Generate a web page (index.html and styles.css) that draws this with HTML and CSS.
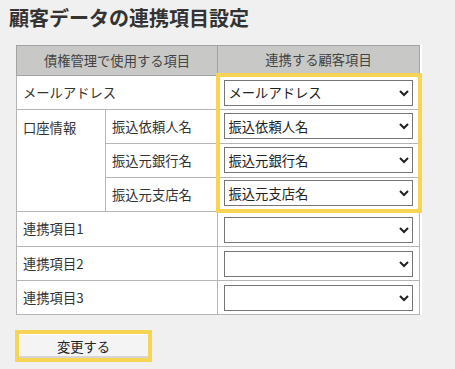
FILE: index.html
```html
<!DOCTYPE html>
<html lang="ja">
  <head>
    <meta charset="utf-8" />
    <title>顧客データの連携項目設定</title>
    <link rel="stylesheet" href="styles.css">
  </head>
  <body>
    <div class="page">
      <h1 class="title">顧客データの連携項目設定</h1>
      <table class="link-table">
        <colgroup>
          <col class="col-group" />
          <col class="col-sub" />
          <col class="col-pick" />
        </colgroup>
        <tr class="head">
          <th colspan="2">債権管理で使用する項目</th>
          <th>連携する顧客項目</th>
        </tr>
        <tr>
          <td colspan="2">メールアドレス</td>
          <td class="pick hl hl-top">
            <select><option>メールアドレス</option></select>
          </td>
        </tr>
        <tr>
          <td rowspan="3" class="group">口座情報</td>
          <td>振込依頼人名</td>
          <td class="pick hl">
            <select><option>振込依頼人名</option></select>
          </td>
        </tr>
        <tr>
          <td>振込元銀行名</td>
          <td class="pick hl">
            <select><option>振込元銀行名</option></select>
          </td>
        </tr>
        <tr>
          <td>振込元支店名</td>
          <td class="pick hl hl-bottom">
            <select><option>振込元支店名</option></select>
          </td>
        </tr>
        <tr>
          <td colspan="2">連携項目1</td>
          <td class="pick"><select><option></option></select></td>
        </tr>
        <tr>
          <td colspan="2">連携項目2</td>
          <td class="pick"><select><option></option></select></td>
        </tr>
        <tr>
          <td colspan="2">連携項目3</td>
          <td class="pick"><select><option></option></select></td>
        </tr>
      </table>
      <button class="save-btn">変更する</button>
    </div>
  </body>
</html>
```

FILE: styles.css
```css
body {
  margin: 0;
  background-color: #eff0ef;
  font-family: "Noto Sans CJK JP", "Noto Sans", sans-serif;
  color: #333;
}
.page {
  padding: 6px 0 0 9px;
}
.title {
  margin: 0 0 15px;
  font-size: 20px;
  line-height: 24px;
  font-weight: bold;
  color: #333;
}
.link-table {
  margin-left: 7px;
  width: 403px;
  table-layout: fixed;
  border-collapse: collapse;
  background-color: white;
  border: 1px solid #a9aaa9;
  font-size: 13.3px;
}
.col-group {
  width: 89px;
}
.col-sub {
  width: 112px;
}
.col-pick {
  width: 202px;
}
.link-table th,
.link-table td {
  border: 1px solid #b4b5b4;
  padding: 0 6px;
  height: 33px;
  text-align: left;
  font-weight: normal;
}
.link-table .head th {
  height: 27px;
  background-color: #c8c9c7;
  color: #444;
  text-align: center;
  border-color: #a2a3a2;
}
.link-table .group {
  vertical-align: top;
  padding-top: 8px;
}
.link-table .pick {
  padding: 0 5px 0 6px;
}
.link-table .hl {
  padding-left: 4px;
  border-left: 4px solid #f8d454;
  border-right: 4px solid #f8d454;
}
.link-table .hl-top {
  height: 31px;
  border-top: 4px solid #f8d454;
}
.link-table .hl-bottom {
  height: 31px;
  border-bottom: 4px solid #f8d454;
}
select {
  display: block;
  width: 189px;
  height: 26px;
  font-family: "Noto Sans CJK JP", "Noto Sans", sans-serif;
  font-size: 13.3px;
  color: #222;
  background-color: white;
}
.save-btn {
  display: block;
  margin: 15px 0 0 6px;
  width: 137px;
  height: 32px;
  border: 4px solid #f8d454;
  background-color: #f3f4f3;
  box-shadow: inset 0 -2px 0 #d4d5d4, inset 1px 1px 0 #fff;
  font-family: "Noto Sans CJK JP", "Noto Sans", sans-serif;
  font-size: 13.3px;
  color: #222;
}
```
